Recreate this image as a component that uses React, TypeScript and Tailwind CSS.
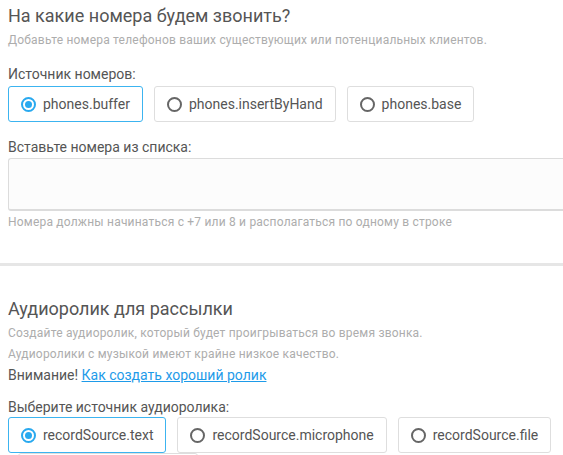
import React from 'react';

type Option = { label: string; checked?: boolean };

function RadioCard({ label, checked }: Option) {
  return (
    <label
      className={
        'flex h-[36px] shrink-0 items-center gap-[7px] rounded-[3px] border pl-[12px] pr-[12px] text-[14px] text-[#555] ' +
        (checked ? 'border-[#3cb4f0]' : 'border-[#dedede]')
      }
    >
      <span
        className={
          'flex h-[15px] w-[15px] shrink-0 items-center justify-center rounded-full border-2 ' +
          (checked ? 'border-[#29a9ef]' : 'border-[#666]')
        }
      >
        {checked && <span className="h-[7px] w-[7px] rounded-full bg-[#29a9ef]" />}
      </span>
      <span>{label}</span>
    </label>
  );
}

function RadioGroup({ options }: { options: Option[] }) {
  return (
    <div className="flex gap-[11px]">
      {options.map((o) => (
        <RadioCard key={o.label} {...o} />
      ))}
    </div>
  );
}

export default function App() {
  return (
    <div
      className="h-[455px] w-[563px] overflow-hidden bg-white"
      style={{ fontFamily: 'Roboto, "Noto Sans", sans-serif' }}
    >
      {/* Phones section */}
      <section className="pl-[8px] pt-[3px]">
        <h2 className="text-[18px] leading-[26px] text-[#555]">На какие номера будем звонить?</h2>
        <p className="mt-[4px] text-[12px] leading-[14px] tracking-[0.2px] text-[#adadad]">
          Добавьте номера телефонов ваших существующих или потенциальных клиентов.
        </p>

        <div className="mt-[18px] text-[14px] leading-[18px] text-[#555]">Источник номеров:</div>
        <div className="mt-[3px]">
          <RadioGroup
            options={[
              { label: 'phones.buffer', checked: true },
              { label: 'phones.insertByHand' },
              { label: 'phones.base' },
            ]}
          />
        </div>

        <div className="mt-[16px] text-[14px] leading-[18px] text-[#555]">Вставьте номера из списка:</div>
        <div className="mt-[2px] h-[53px] rounded-l-[3px] border border-b-2 border-r-0 border-[#dcdcdc] bg-[#fcfcfc]" />
        <p className="mt-[4px] text-[12px] leading-[14px] tracking-[0.2px] text-[#adadad]">
          Номера должны начинаться с +7 или 8 и располагаться по одному в строке
        </p>
      </section>

      <div className="mt-[34px] h-[3px] bg-[#e6e6e6]" />

      {/* Audio section */}
      <section className="pl-[8px] pt-[30px]">
        <h2 className="text-[18px] leading-[26px] text-[#555]">Аудиоролик для рассылки</h2>
        <p className="mt-[1px] text-[12px] leading-[21px] tracking-[0.2px] text-[#adadad]">
          Создайте аудиоролик, который будет проигрываться во время звонка.
        </p>
        <p className="text-[12px] leading-[21px] tracking-[0.2px] text-[#adadad]">
          Аудиоролики с музыкой имеют крайне низкое качество.
        </p>
        <p className="text-[14px] leading-[20px] text-[#555]">
          Внимание!{' '}
          <a href="#" className="text-[#1e9be9] underline">
            Как создать хороший ролик
          </a>
        </p>

        <div className="mt-[13px] text-[14px] leading-[18px] text-[#555]">Выберите источник аудиоролика:</div>
        <div className="mt-[1px]">
          <RadioGroup
            options={[
              { label: 'recordSource.text', checked: true },
              { label: 'recordSource.microphone' },
              { label: 'recordSource.file' },
            ]}
          />
        </div>
        <div className="ml-[10px] h-[20px] w-[180px] rounded-[3px] border border-[#dedede]" />
      </section>
    </div>
  );
}
